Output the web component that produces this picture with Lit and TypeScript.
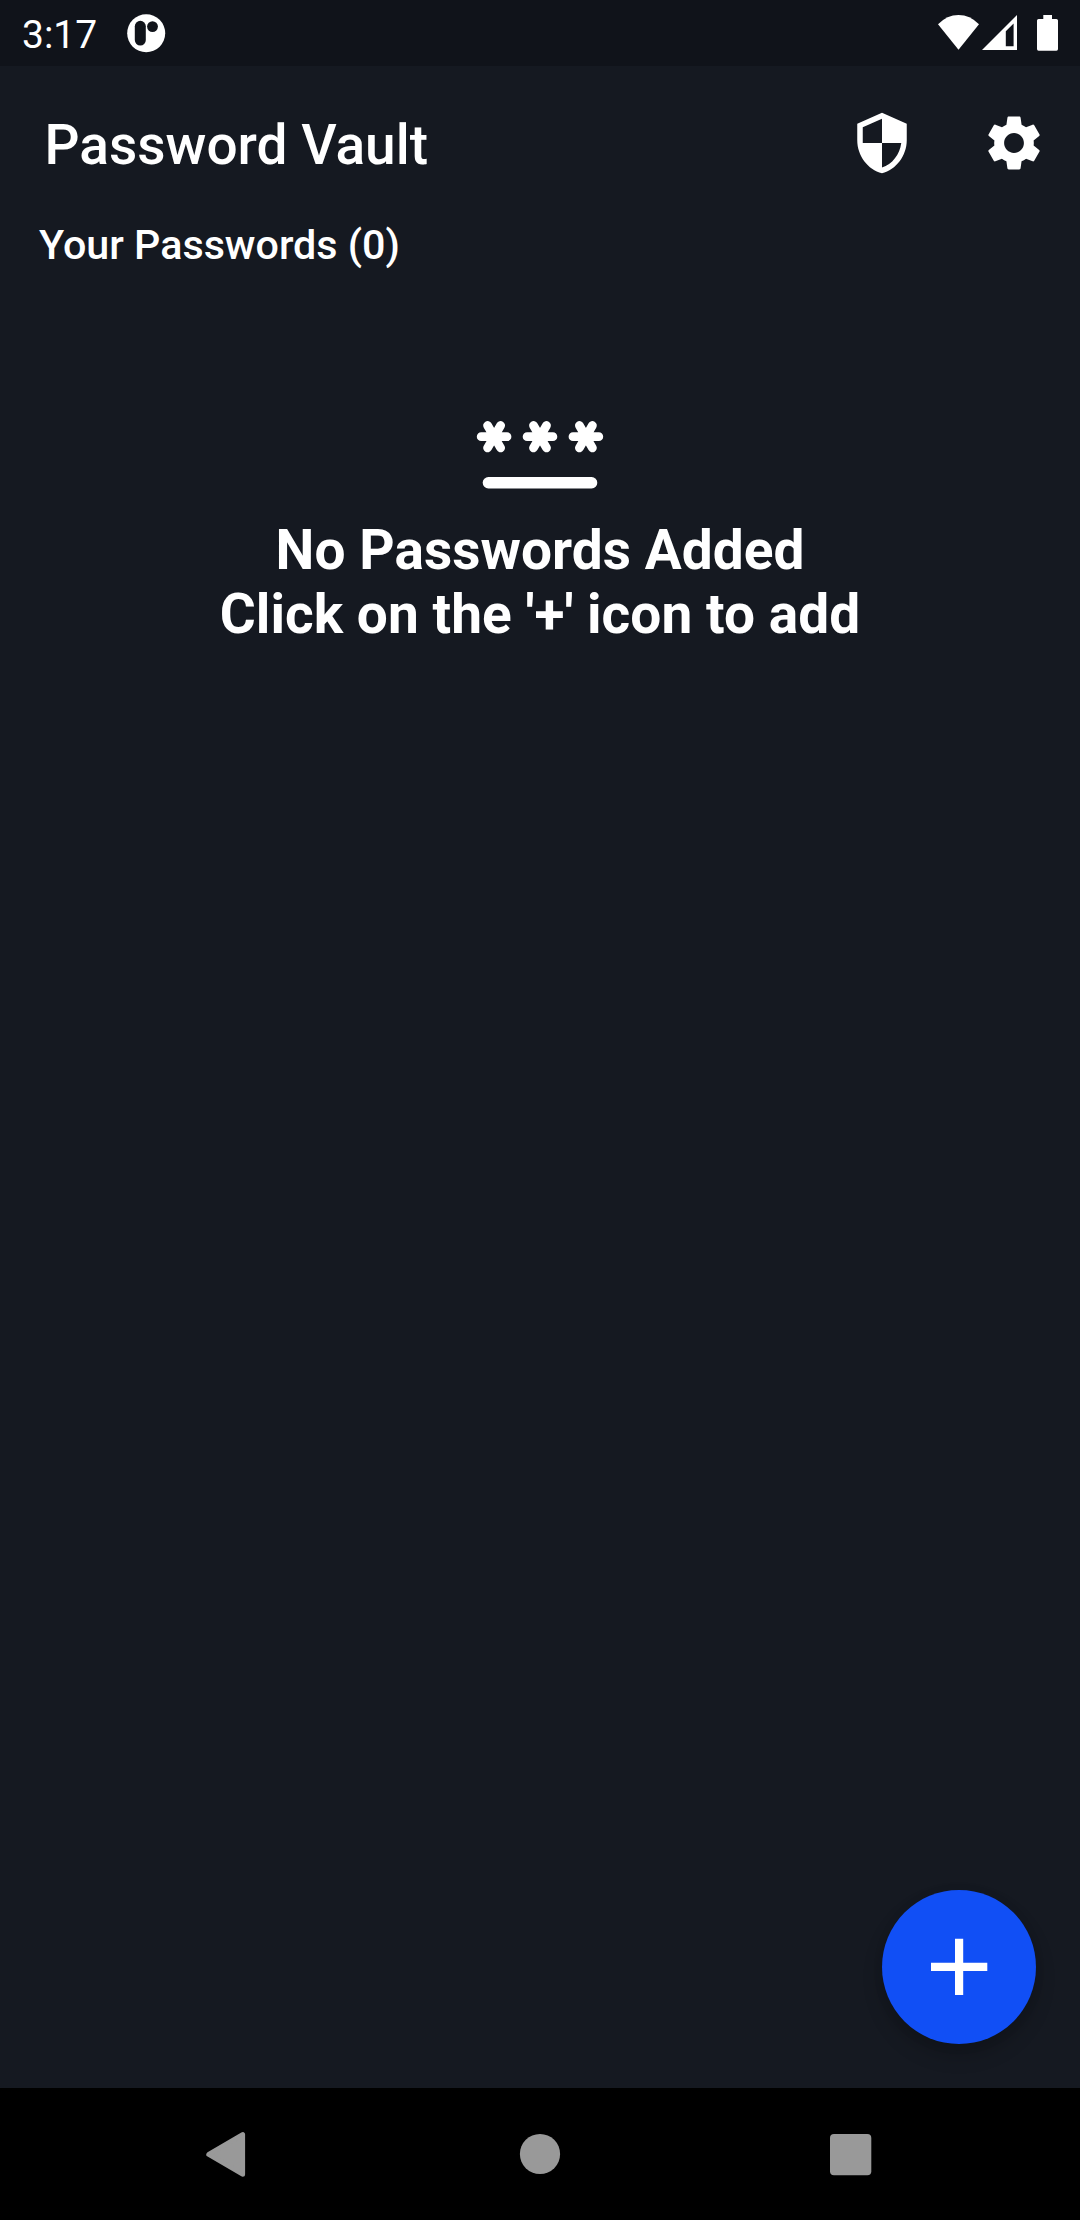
import { LitElement, html, css, svg } from "lit";
import { customElement, property } from "lit/decorators.js";

@customElement("status-bar")
class StatusBar extends LitElement {
  @property() time = "";

  static styles = css`
    :host {
      display: flex;
      align-items: center;
      height: 66px;
      box-sizing: border-box;
      padding-left: 22px;
      background: #10131a;
      color: #fff;
      font: 400 39px/66px Roboto, sans-serif;
    }
    .time {
      width: 99px;
      white-space: nowrap;
      padding-top: 3px;
    }
    .app {
      flex: 1;
    }
    svg {
      display: block;
    }
  `;

  render() {
    return html`
      <span class="time">${this.time}</span>
      <div class="app">
        <svg width="50" height="66" viewBox="121 0 50 66">
          <circle cx="146.2" cy="33.2" r="19" fill="#fff" />
          <rect x="134.8" y="20.8" width="11" height="24.8" rx="5.5" fill="#10131a" />
          <circle cx="152.5" cy="26.6" r="5.4" fill="#10131a" />
        </svg>
      </div>
      <svg width="150" height="66" viewBox="930 0 150 66" fill="#fff">
        <path d="M938 24.3Q947 15 958.5 15T979 24.3L958.5 49.7z" />
        <path
          fill-rule="evenodd"
          d="M982 50L1017 15V50zM1005.8 31.3V46.2H1013.6V23.6z"
        />
        <path
          d="M1043.3 15h8.7v4h4.4q1.6 0 1.6 1.6v28.5q0 1.6-1.6 1.6h-17.8q-1.6 0-1.6-1.6v-28.5q0-1.6 1.6-1.6h4.7z"
        />
      </svg>
    `;
  }
}

@customElement("app-bar")
class AppBar extends LitElement {
  static styles = css`
    :host {
      display: flex;
      align-items: center;
      height: 154px;
      box-sizing: border-box;
      padding: 0 33px 0 44.5px;
      color: #fff;
    }
    .title {
      flex: 1;
      margin: 0;
      padding-top: 4px;
      font: 500 55px/64px Roboto, sans-serif;
      white-space: nowrap;
    }
    .actions {
      display: flex;
      gap: 66px;
    }
    svg {
      display: block;
    }
  `;

  render() {
    return html`
      <h1 class="title"><slot></slot></h1>
      <div class="actions">
        <svg width="66" height="66" viewBox="0 0 24 24" fill="currentColor">
          <path
            d="M12 1L3 5v6c0 5.55 3.84 10.74 9 12 5.16-1.26 9-6.45 9-12V5l-9-4zm0 10.99h7c-.53 4.12-3.28 7.79-7 8.94V12H5V6.3l7-3.11v8.8z"
          />
        </svg>
        <svg width="66" height="66" viewBox="0 0 24 24" fill="currentColor">
          <path
            d="M19.14 12.94c.04-.3.06-.61.06-.94 0-.32-.02-.64-.07-.94l2.03-1.58c.18-.14.23-.41.12-.61l-1.92-3.32c-.12-.22-.37-.29-.59-.22l-2.39.96c-.5-.38-1.03-.7-1.62-.94l-.36-2.54c-.04-.24-.24-.41-.48-.41h-3.84c-.24 0-.43.17-.47.41l-.36 2.54c-.59.24-1.13.57-1.62.94l-2.39-.96c-.22-.08-.47 0-.59.22L2.74 8.87c-.12.21-.08.47.12.61l2.03 1.58c-.05.3-.09.63-.09.94s.02.64.07.94l-2.03 1.58c-.18.14-.23.41-.12.61l1.92 3.32c.12.22.37.29.59.22l2.39-.96c.5.38 1.03.7 1.62.94l.36 2.54c.05.24.24.41.48.41h3.84c.24 0 .44-.17.47-.41l.36-2.54c.59-.24 1.13-.56 1.62-.94l2.39.96c.22.08.47 0 .59-.22l1.92-3.32c.12-.22.07-.47-.12-.61l-2.01-1.58zM12 15.6c-1.98 0-3.6-1.62-3.6-3.6s1.62-3.6 3.6-3.6 3.6 1.62 3.6 3.6-1.62 3.6-3.6 3.6z"
          />
        </svg>
      </div>
    `;
  }
}

@customElement("nav-bar")
class NavBar extends LitElement {
  static styles = css`
    :host {
      display: block;
      height: 132px;
      background: #000;
    }
    svg {
      display: block;
    }
  `;

  render() {
    return html`
      <svg width="1080" height="132" viewBox="0 2088 1080 132" fill="#999">
        <path
          d="M208.8 2154.4L242.6 2134.6V2174.2z"
          stroke="#999"
          stroke-width="5"
          stroke-linejoin="round"
        />
        <circle cx="540" cy="2154" r="20.1" />
        <rect x="830" y="2134" width="41.3" height="41.3" rx="4" />
      </svg>
    `;
  }
}

@customElement("app-root")
class AppRoot extends LitElement {
  @property({ type: Number }) count = 0;

  static styles = css`
    :host {
      display: flex;
      flex-direction: column;
      position: relative;
      width: 1080px;
      height: 2220px;
      overflow: hidden;
      background: #151921;
      color: #fff;
      font-family: Roboto, sans-serif;
    }
    .content {
      flex: 1;
      display: flex;
      flex-direction: column;
    }
    .count {
      margin: 0;
      padding: 1px 0 0 39px;
      font-size: 41.25px;
      font-weight: 500;
      line-height: 48px;
      white-space: nowrap;
    }
    .empty {
      display: flex;
      flex-direction: column;
      align-items: center;
      padding-top: 110px;
    }
    .empty svg {
      display: block;
    }
    .message {
      margin: 0;
      padding-top: 1px;
      font-size: 55px;
      font-weight: 700;
      line-height: 64px;
      letter-spacing: 0.04px;
      text-align: center;
      white-space: nowrap;
    }
    .fab {
      position: absolute;
      right: 44px;
      bottom: 176px;
      width: 154px;
      height: 154px;
      padding: 0;
      border: 0;
      border-radius: 50%;
      background: #114ff5;
      box-shadow: 0 11px 20px rgba(0, 0, 0, 0.2), 0 2px 12px rgba(0, 0, 0, 0.06);
    }
    .fab svg {
      display: block;
    }
  `;

  private star(cx: number) {
    return svg`<path d="M${cx - 12.9} 57.7h25.8M${cx - 6.5} 46.5l13 22.4M${cx + 6.5} 46.5l-13 22.4" />`;
  }

  render() {
    return html`
      <status-bar time="3:17"></status-bar>
      <app-bar>Password Vault</app-bar>
      <main class="content">
        <h2 class="count">Your Passwords (${this.count})</h2>
        <section class="empty">
          <svg width="138" height="138" viewBox="0 0 138 138">
            <g fill="none" stroke="#fff" stroke-width="8.8" stroke-linecap="round">
              ${[23.1, 69, 114.9].map((x) => this.star(x))}
            </g>
            <rect x="11.7" y="98" width="114.6" height="11.5" rx="5.7" fill="#fff" />
          </svg>
          <p class="message">No Passwords Added<br />Click on the '+' icon to add</p>
        </section>
      </main>
      <button class="fab" aria-label="Add">
        <svg width="154" height="154" viewBox="0 0 154 154" fill="#fff">
          <path d="M73 48.7h8.2v24h24.1v8.2H81.2v24.1H73V80.9H49v-8.2h24z" />
        </svg>
      </button>
      <nav-bar></nav-bar>
    `;
  }
}
